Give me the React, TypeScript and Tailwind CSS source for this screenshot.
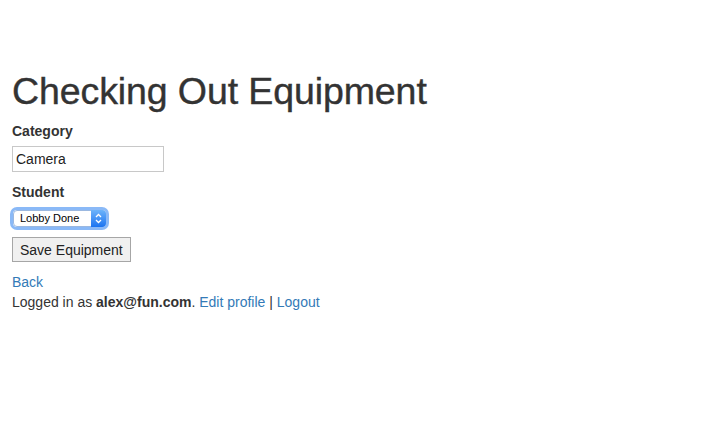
export default function App() {
  return (
    <div
      className="min-h-screen bg-white px-3 text-[14px] leading-[20px] text-[#333]"
      style={{ fontFamily: '"Liberation Sans", Arial, sans-serif' }}
    >
      <h1 className="pt-[71px] pb-[10px] text-[37.5px] leading-[40px] font-medium tracking-[-0.1px] [-webkit-text-stroke:0.4px_#333]">
        Checking Out Equipment
      </h1>

      <form className="flex flex-col items-start">
        <label className="font-bold">Category</label>
        <input
          defaultValue="Camera"
          className="mt-[5px] h-[26px] w-[152px] border border-[#c8c8c8] px-[3px] text-[14px] text-[#222] outline-none"
        />

        <label className="mt-[10px] font-bold">Student</label>
        <div className="relative mt-[8px] ml-[1px] rounded-[4px] shadow-[0_0_0_3px_#8ab9f7]">
          <select className="block h-[17px] w-[93px] appearance-none rounded-[4px] border border-[#9bb8e0] bg-white pl-[6px] text-[11px] leading-[15px] text-black outline-none">
            <option>Lobby Done</option>
          </select>
          <span className="absolute top-0 right-0 flex h-[17px] w-[15px] items-center justify-center rounded-r-[4px] bg-gradient-to-b from-[#6cb3fa] to-[#1a73f0]">
            <svg width="7" height="11" viewBox="0 0 7 11" fill="none" stroke="white" strokeWidth="1.3">
              <path d="M1 4 L3.5 1.5 L6 4" />
              <path d="M1 7 L3.5 9.5 L6 7" />
            </svg>
          </span>
        </div>

        <button
          type="button"
          className="mt-[10px] h-[25px] border border-[#a6a6a6] bg-[#f0f0f0] px-[7px] text-[14px] text-[#222]"
        >
          Save Equipment
        </button>
      </form>

      <div className="mt-[10px]">
        <a href="#" className="text-[#337ab7]">
          Back
        </a>
      </div>
      <p>
        Logged in as <b>alex@fun.com</b>.{" "}
        <a href="#" className="text-[#337ab7]">
          Edit profile
        </a>{" "}
        |{" "}
        <a href="#" className="text-[#337ab7]">
          Logout
        </a>
      </p>
    </div>
  );
}
